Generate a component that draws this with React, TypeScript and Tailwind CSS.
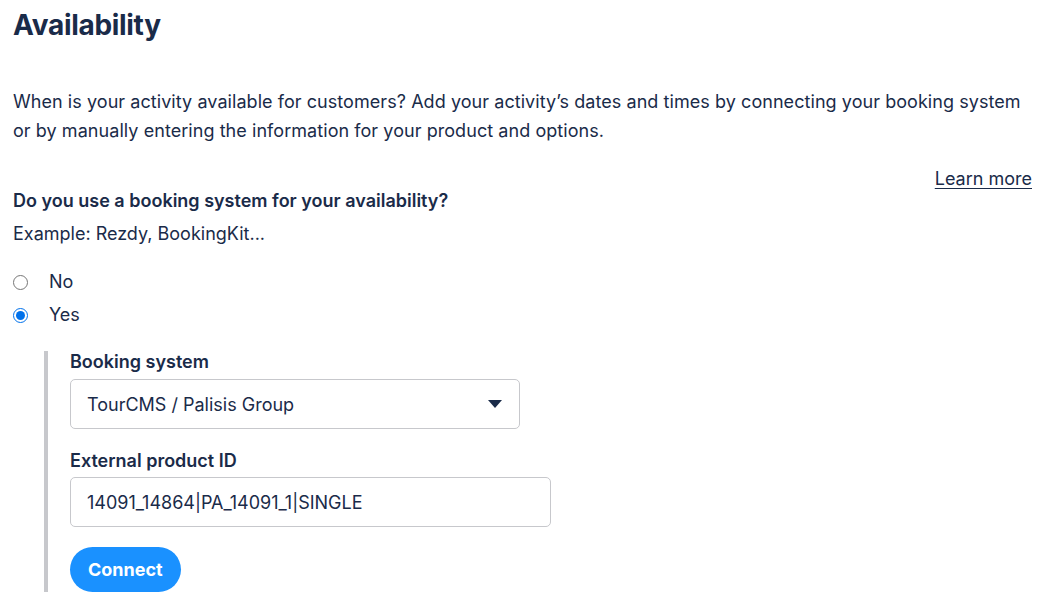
import React, { useState } from 'react';

const font = { fontFamily: 'Inter, "Noto Sans", sans-serif' };

const App = () => {
  const [usesSystem, setUsesSystem] = useState<'no' | 'yes'>('yes');

  return (
    <div className="bg-white min-h-screen text-[#1a2b49] px-[13px]" style={font}>
      <h1 className="text-[28px] font-bold leading-[34px] pt-[8px] tracking-[-0.3px]">Availability</h1>

      <p className="text-[18px] leading-[29px] mt-[45px] tracking-[0.06px]">
        When is your activity available for customers? Add your activity’s dates and times by connecting your booking system
        or by manually entering the information for your product and options.
      </p>

      <div className="flex justify-end mt-[22px] pr-[1px]">
        <a href="#" className="text-[18px] leading-[24px] underline underline-offset-[3px]">
          Learn more
        </a>
      </div>

      <h2 className="text-[18px] font-semibold leading-[24px] -mt-[2px]">Do you use a booking system for your availability?</h2>
      <p className="text-[18px] leading-[24px] mt-[9px]">Example: Rezdy, BookingKit...</p>

      <div className="flex flex-col gap-[9px] mt-[24px]">
        {(['no', 'yes'] as const).map((v) => (
          <label key={v} className="flex items-center gap-[21px] cursor-pointer">
            <input
              type="radio"
              name="system"
              checked={usesSystem === v}
              onChange={() => setUsesSystem(v)}
              className="w-[15px] h-[15px] m-0 accent-[#0071eb]"
            />
            <span className="text-[18px] leading-[24px]">{v === 'no' ? 'No' : 'Yes'}</span>
          </label>
        ))}
      </div>

      <div className="ml-[31px] mt-[24px] border-l-4 border-[#c7c8cc] pl-[22px]">
        <label className="block text-[18px] font-semibold leading-[22px]">Booking system</label>
        <div className="relative mt-[6px] w-[450px]">
          <select className="appearance-none w-full h-[50px] border border-[#c7c8cc] rounded-[5px] pl-[16px] pr-[40px] text-[18px] text-[#1a2b49] bg-white" style={font}>
            <option>TourCMS / Palisis Group</option>
          </select>
          <svg className="absolute right-[18px] top-[21px] pointer-events-none" width="14" height="8" viewBox="0 0 14 8">
            <path d="M0 0h14L7 8z" fill="#1a2b49" />
          </svg>
        </div>

        <label className="block text-[18px] font-semibold leading-[24px] mt-[20px]">External product ID</label>
        <input
          type="text"
          defaultValue="14091_14864|PA_14091_1|SINGLE"
          className="block mt-[4px] w-[481px] h-[50px] border border-[#c7c8cc] rounded-[5px] px-[16px] text-[18px] text-[#1a2b49]"
          style={font}
        />

        <button className="mt-[20px] h-[45px] px-[18px] rounded-full bg-[#1a91ff] text-white text-[18px] font-bold" style={font}>
          Connect
        </button>
      </div>
    </div>
  );
};

export default App;
